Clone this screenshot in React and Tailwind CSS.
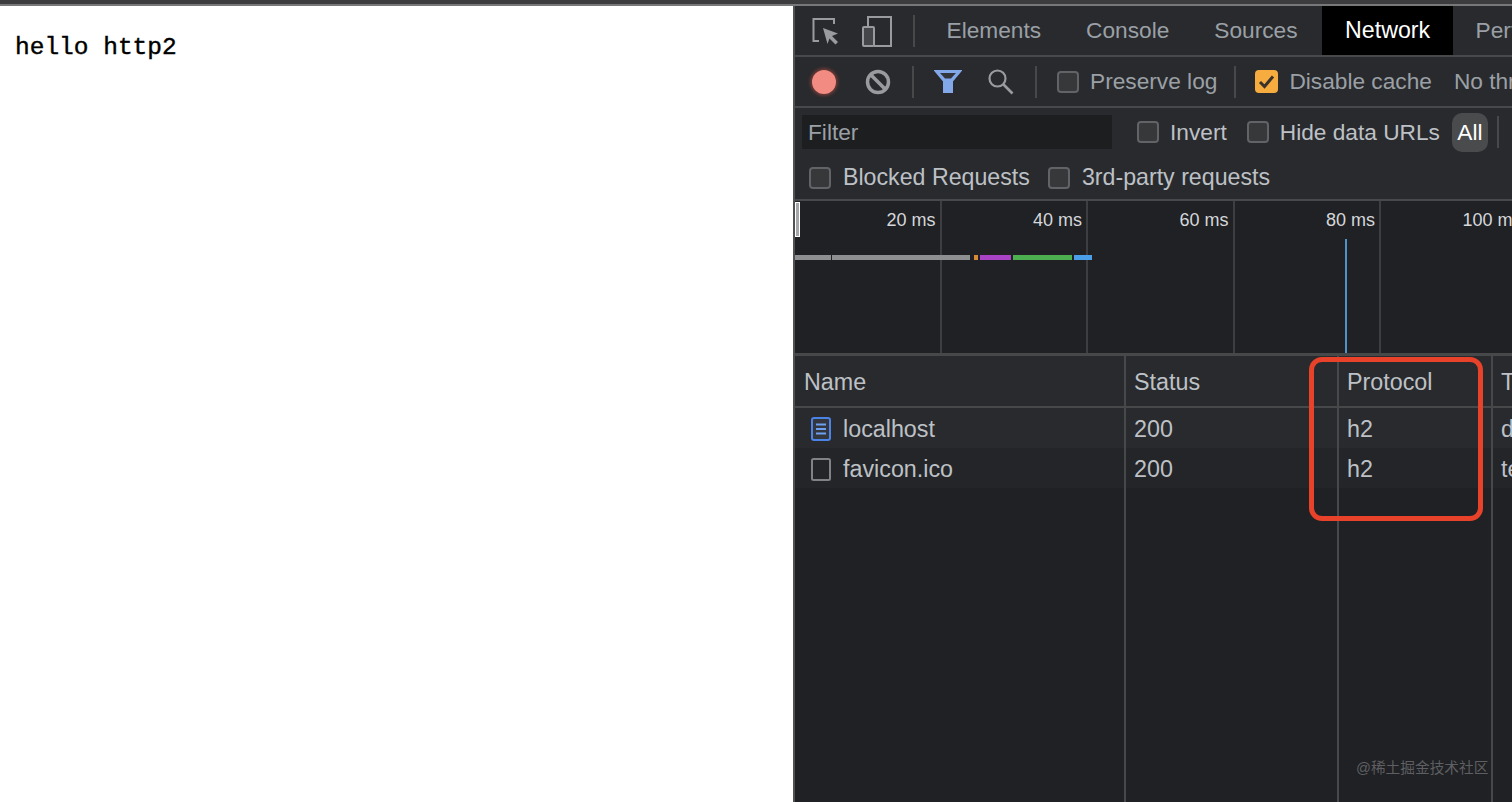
const Divider = ({ className = '' }) => <div className={`w-[2px] h-[32px] bg-[#47484a] shrink-0 ${className}`} />;

function Checkbox({ checked, className = '' }) {
  if (checked) {
    return (
      <div className={`w-[23px] h-[23px] rounded-[4px] bg-[#f6ac3e] flex items-center justify-center shrink-0 ${className}`}>
        <svg width="17" height="15" viewBox="0 0 17 15" fill="none">
          <path d="M2 8l4.500 4.500L15 2.500" stroke="#3b3329" strokeWidth="3" />
        </svg>
      </div>
    );
  }
  return <div className={`w-[22px] h-[22px] rounded-[4px] border-2 border-[#626366] bg-[#37383a] shrink-0 ${className}`} />;
}

function Label({ children, className = '' }) {
  return <span className={`whitespace-nowrap shrink-0 ${className}`}>{children}</span>;
}

function InspectIcon({ className = '' }) {
  return (
    <svg width="28" height="28" viewBox="0 0 28 28" fill="none" className={`shrink-0 ${className}`}>
      <path d="M7 24H1.500V2H22v5" stroke="#9a9b9e" strokeWidth="2" />
      <path d="M11 11l15 5.500-6 2.500 6 6-2.500 2.500-6-6-2 5.500z" fill="#9a9b9e" />
    </svg>
  );
}

function DeviceIcon({ className = '' }) {
  return (
    <svg width="30" height="32" viewBox="0 0 30 32" fill="none" className={`shrink-0 ${className}`}>
      <path d="M6 12V2h23v29H12" stroke="#9a9b9e" strokeWidth="2" />
      <rect x="1" y="12" width="11" height="19" rx="1" stroke="#9a9b9e" strokeWidth="2" fill="#45464a" />
    </svg>
  );
}

function StopIcon({ className = '' }) {
  return (
    <svg width="26" height="26" viewBox="0 0 26 26" fill="none" className={`shrink-0 ${className}`}>
      <circle cx="13" cy="13" r="10.500" stroke="#9a9b9e" strokeWidth="3.500" />
      <path d="M5.500 5.500l15 15" stroke="#9a9b9e" strokeWidth="3.500" />
    </svg>
  );
}

function FilterIcon({ className = '' }) {
  return (
    <svg width="28" height="25" viewBox="0 0 28 25" fill="none" className={`shrink-0 ${className}`}>
      <path d="M1.500 2h25L18 12v11h-8V12z" fill="#82a8ea" />
      <path d="M1.500 2h25L18 12v11h-8V12z" stroke="#82a8ea" strokeWidth="2" />
      <path d="M6 4h16l-5 5.500h-6z" fill="#33363d" />
    </svg>
  );
}

function SearchIcon({ className = '' }) {
  return (
    <svg width="27" height="27" viewBox="0 0 27 27" fill="none" className={`shrink-0 ${className}`}>
      <circle cx="10.500" cy="10.500" r="8" stroke="#9a9b9e" strokeWidth="2.200" />
      <path d="M16.500 16.500l9 9" stroke="#9a9b9e" strokeWidth="2.600" />
    </svg>
  );
}

function DocIcon() {
  return (
    <svg width="20" height="24" viewBox="0 0 20 24" fill="none" className="shrink-0">
      <rect x="1" y="1" width="18" height="22" rx="2" stroke="#4c83e6" strokeWidth="2" fill="#33363d" />
      <path d="M5 7.500h10M5 12h10M5 16.500h10" stroke="#6f9ff0" strokeWidth="2" />
    </svg>
  );
}

function FileIcon() {
  return (
    <svg width="20" height="23" viewBox="0 0 20 23" fill="none" className="shrink-0">
      <rect x="1" y="1" width="18" height="21" rx="1.500" stroke="#818285" strokeWidth="2" />
    </svg>
  );
}

const timeline = ['20 ms', '40 ms', '60 ms', '80 ms', '100 ms'];

const waterfall = [
  { left: 'left-0', width: 'w-[36px]', color: 'bg-[#8e8f91]' },
  { left: 'left-[37px]', width: 'w-[138px]', color: 'bg-[#8e8f91]' },
  { left: 'left-[179px]', width: 'w-[4px]', color: 'bg-[#d98a35]' },
  { left: 'left-[185px]', width: 'w-[31px]', color: 'bg-[#a843c6]' },
  { left: 'left-[218px]', width: 'w-[59px]', color: 'bg-[#4caf50]' },
  { left: 'left-[279px]', width: 'w-[18px]', color: 'bg-[#4a9fe8]' },
];

const rows = [
  { icon: <DocIcon />, name: 'localhost', bg: 'bg-[#292a2d]', type: 'document' },
  { icon: <FileIcon />, name: 'favicon.ico', bg: 'bg-[#242528]', type: 'text/html' },
];

function Cols({ name, status, protocol, type, className = '' }) {
  return (
    <div className={`flex text-[23.300px] ${className}`}>
      <div className="w-[331px] shrink-0 border-r-2 border-[#47484a] flex items-center pl-[9px] pt-[2px]">{name}</div>
      <div className="w-[213px] shrink-0 border-r-2 border-[#47484a] flex items-center pl-[8px] pt-[2px]">{status}</div>
      <div className="w-[154px] shrink-0 border-r-2 border-[#47484a] flex items-center pl-[8px] pt-[2px]">{protocol}</div>
      <div className="flex-1 flex items-center pl-[8px] pt-[2px] whitespace-nowrap">{type}</div>
    </div>
  );
}

export default function App() {
  return (
    <div className="w-[1512px] h-[802px] overflow-hidden bg-white flex flex-col font-['Liberation_Sans',sans-serif]">
      <div className="h-[6px] shrink-0 bg-[#3c3c3e] border-b-2 border-[#77787a]" />
      <div className="flex-1 flex min-h-0">
        <div className="w-[793px] shrink-0 pt-[28px] pl-[15px]">
          <p className="font-['Liberation_Mono',monospace] text-[24.500px] leading-[28px] text-black [-webkit-text-stroke:0.4px_black]">hello http2</p>
        </div>

        <div className="relative w-[719px] shrink-0 overflow-hidden flex flex-col border-l-2 border-[#505153] bg-[#202124] text-[22.700px] text-[#bdc1c6]">
          {/* tabs */}
          <div className="h-[51px] shrink-0 flex items-stretch bg-[#292a2d] border-b-2 border-[#47484a]">
            <div className="flex items-center pl-[17px]">
              <InspectIcon />
              <DeviceIcon className="ml-[22px]" />
            </div>
            <div className="flex items-center pl-[21px]"><Divider /></div>
            <div className="flex items-stretch pl-[9px]">
              {['Elements', 'Console', 'Sources'].map((tab) => (
                <div key={tab} className="flex items-center px-[22.500px] whitespace-nowrap text-[#9aa0a6]">
                  {tab}
                </div>
              ))}
              <div className="ml-[2px] flex items-center px-[23px] whitespace-nowrap bg-black text-white text-[23.200px]">Network</div>
              <div className="flex items-center px-[22.500px] whitespace-nowrap text-[#9aa0a6]">Performance</div>
            </div>
          </div>

          {/* toolbar */}
          <div className="h-[51px] shrink-0 flex items-center bg-[#292a2d] border-b-2 border-[#47484a] text-[#9aa0a6]">
            <div className="ml-[17px] w-[24px] h-[24px] rounded-full bg-[#f28b82] shadow-[0_0_3px_2px_#6b3a37] shrink-0" />
            <StopIcon className="ml-[29px]" />
            <Divider className="ml-[21px]" />
            <FilterIcon className="ml-[20px]" />
            <SearchIcon className="ml-[25px]" />
            <Divider className="ml-[21px]" />
            <Checkbox className="ml-[20px]" />
            <Label className="ml-[11px]">Preserve log</Label>
            <Divider className="ml-[17px]" />
            <Checkbox checked className="ml-[19px]" />
            <Label className="ml-[11px]">Disable cache</Label>
            <Label className="ml-[22px]">No throttling</Label>
          </div>

          {/* filter */}
          <div className="h-[93px] shrink-0 bg-[#292a2d] border-b-2 border-[#47484a] flex flex-col">
            <div className="h-[49px] flex items-center pb-[1px]">
              <div className="ml-[7px] w-[310px] h-[34px] shrink-0 bg-[#1d1e20] flex items-center pl-[6px] text-[#9aa0a6]">Filter</div>
              <Checkbox className="ml-[25px]" />
              <Label className="ml-[11px]">Invert</Label>
              <Checkbox className="ml-[20px]" />
              <Label className="ml-[11px]">Hide data URLs</Label>
              <div className="ml-[12px] w-[36px] h-[39px] rounded-[10px] bg-[#4a4b4d] text-white flex items-center justify-center shrink-0">All</div>
              <Divider className="ml-[9px]" />
            </div>
            <div className="h-[41px] flex items-center text-[23.200px]">
              <Checkbox className="ml-[14px]" />
              <Label className="ml-[12px]">Blocked Requests</Label>
              <Checkbox className="ml-[18px]" />
              <Label className="ml-[12px]">3rd-party requests</Label>
            </div>
          </div>

          {/* overview */}
          <div className="relative h-[155px] shrink-0 flex bg-[#202124] border-b-[3px] border-[#47484a] text-[18px] text-[#d5d7da]">
            {timeline.map((t) => (
              <div key={t} className="w-[146.500px] shrink-0 border-r-2 border-[#3d3e41] flex justify-end pr-[4px] pt-[9px] leading-[21px] whitespace-nowrap">
                {t}
              </div>
            ))}
            <div className="absolute left-0 top-[1px] w-[5px] h-[35px] border border-white bg-[#a5a6a8]" />
            {waterfall.map((b) => (
              <div key={b.left} className={`absolute top-[54px] h-[5px] ${b.left} ${b.width} ${b.color}`} />
            ))}
            <div className="absolute left-[550px] top-[38px] bottom-0 w-[2px] bg-[#4f93c9]" />
          </div>

          {/* requests */}
          <Cols
            className="h-[52px] shrink-0 bg-[#292a2d] border-b-2 border-[#47484a]"
            name="Name"
            status="Status"
            protocol="Protocol"
            type="Type"
          />
          {rows.map((r) => (
            <Cols
              key={r.name}
              className={`h-[40px] shrink-0 ${r.bg}`}
              name={<><span className="ml-[7px] mr-[12px] flex">{r.icon}</span>{r.name}</>}
              status="200"
              protocol="h2"
              type={r.type}
            />
          ))}
          <Cols className="flex-1" />

          {/* annotation over the Protocol column */}
          <div className="absolute left-[514px] top-[351px] w-[174px] h-[164px] rounded-[13px] border-[5px] border-[#e8432a]" />
          <div className="absolute left-[561px] top-[750px] text-[14.700px] leading-[24px] text-[#5e5f62] whitespace-nowrap font-['Liberation_Sans','Noto_Sans_CJK_SC',sans-serif]">@稀土掘金技术社区</div>
        </div>
      </div>
    </div>
  );
}
